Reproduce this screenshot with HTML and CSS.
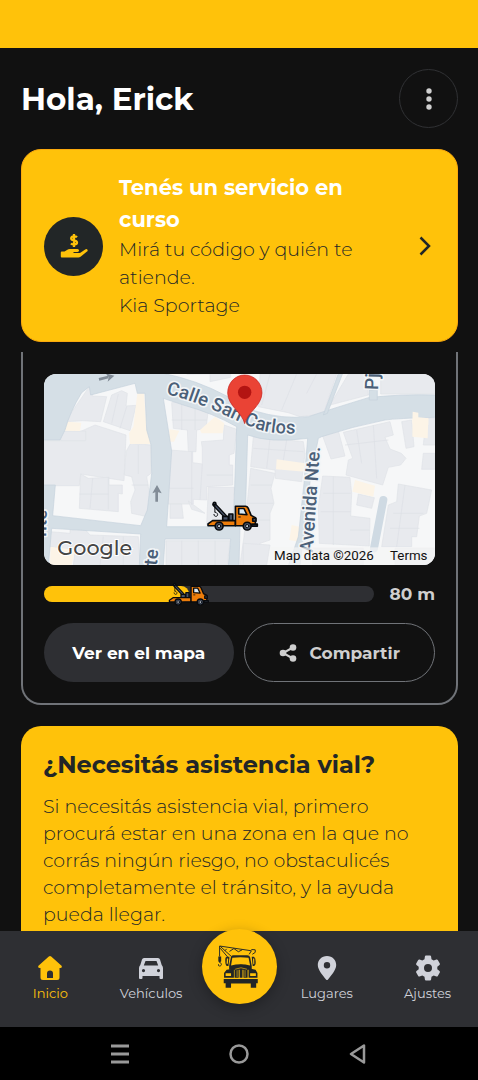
FILE: index.html
```html
<!DOCTYPE html>
<html lang="es">
<head>
    <meta charset="UTF-8">
    <meta name="viewport" content="width=device-width, initial-scale=1.0">
    <title>Asistencia vial</title>
    <link rel="stylesheet" href="styles.css">
</head>
<body>
    <!-- shared truck drawing, used on the map and on the progress bar -->
    <svg class="defs" aria-hidden="true">
        <symbol id="truck" viewBox="36 30 158 97">
            <g stroke="#080a0d" stroke-width="5" stroke-linejoin="round" stroke-linecap="round">
                <path d="M58 42 L91 77" stroke-width="12"/>
                <path d="M60 44 L92 78" stroke="#465166" stroke-width="4"/>
                <circle cx="59" cy="39" r="4" fill="#465166"/>
                <path d="M60 45V65M61 65C72 68 70 79 62 78Q57 77 57 72" fill="none" stroke-width="3"/>
                <path d="M84 91V78H101V91ZM103 91V71H115V91Z" fill="#465166"/>
                <path d="M39 101L53 91H123V107H39Z" fill="#ed7d0b"/>
                <path d="M123 107V47H154Q159 47 162 53L171 75L184 82V107Z" fill="#ed7d0b"/>
                <path d="M133 54H149L158 73L133 71Z" fill="#d8e9f5"/>
                <path d="M133 80H138" stroke-width="3"/>
                <path d="M176 84H186V93H176Z" fill="#465166"/>
                <path d="M173 102H190V108H173Z" fill="#465166"/>
                <circle cx="73" cy="108" r="12" fill="#465166"/>
                <circle cx="73" cy="108" r="5" fill="#c4ccd6" stroke-width="3"/>
                <circle cx="159" cy="108" r="12" fill="#465166"/>
                <circle cx="159" cy="108" r="5" fill="#c4ccd6" stroke-width="3"/>
            </g>
        </symbol>
    </svg>

    <div class="status-bar"></div>

    <main class="content">
        <header class="header">
            <h1>Hola, Erick</h1>
            <button class="menu-btn" type="button" aria-label="Menú">
                <svg width="8" height="24" viewBox="0 0 8 24" fill="#cfcfcf">
                    <circle cx="4" cy="4" r="2.7"/>
                    <circle cx="4" cy="12" r="2.7"/>
                    <circle cx="4" cy="20" r="2.7"/>
                </svg>
            </button>
        </header>

        <a class="service" href="#servicio">
            <span class="service-icon">
                <svg width="28" height="28" viewBox="0 0 28 28">
                    <path d="M17 5.2C15.800 4 11.200 3.700 11.200 6.400C11.200 9.100 17 7.600 17 10.500C17 13.100 12.500 12.900 10.900 11.500M14 2V15" fill="none" stroke="#ffc20a" stroke-width="2.300"/>
                    <path d="M.8 20.500Q.8 19.600 1.700 19.600H4.500L7 17.900Q8.200 17 10 17H17.500Q19.200 17.200 19 18.700Q18.700 20 17.200 20H13.500V21H20L25.200 17.400Q26.700 16.500 27.500 17.700Q28 18.800 27 19.600L20.500 24.800Q19.600 25.500 18.400 25.500H1.700Q.8 25.500.8 24.600Z" fill="#ffc20a"/>
                </svg>
            </span>
            <span class="service-text">
                <strong>Tenés un servicio en curso</strong>
                <span>Mirá tu código y quién te atiende.</span>
                <span>Kia Sportage</span>
            </span>
            <svg class="chevron" width="12" height="20" viewBox="0 0 12 20">
                <path d="M1.500 1.500L10 10L1.500 18.500" fill="none" stroke="#222627" stroke-width="2.500"/>
            </svg>
        </a>

        <section class="tracking">
            <svg class="map" viewBox="12 12 1173 573" preserveAspectRatio="xMidYMid slice" role="img" aria-label="Mapa">
                <rect x="12" y="12" width="1173" height="573" fill="#f6f7f8"/>
                <!-- buildings -->
                <g fill="#e8eaee" stroke="#dfe2e7" stroke-width="2">
                    <path d="M12 212H60L165 165L258 195L252 332L122 312L118 347H12Z"/>
                    <path d="M75 155L148 50L158 78L200 80L182 155L130 152ZM62 183H137V212H62Z"/>
                    <path d="M215 75L245 62L262 70L258 108L288 106L270 182L190 155Z"/>
                    <path d="M272 220L333 225V310L320 320L333 400L322 440L275 430L272 395L285 360L275 320L253 315L258 245Z"/>
                    <path d="M122 312L145 325L207 322V345H247V372L235 370V425L118 415Z"/>
                    <path d="M30 485L90 490V480L135 478L150 495L295 500L300 585H100L105 545L30 530Z"/>
                    <path d="M395 98L430 88L505 120L498 175L470 180L468 245H445L442 180L400 175Z"/>
                    <path d="M388 240L458 245V278L487 282V235L484 215L550 210L552 165L590 178L582 250L568 255V285H578V345L500 350V390L460 388V402H382Z"/>
                    <path d="M390 402H425L430 445H390ZM445 393L495 430L455 418ZM505 352H583L578 465H500Z"/>
                    <path d="M378 512H570L562 585H378ZM440 12L510 10V35L572 22V12Z"/>
                    <path d="M660 12H890L850 132L780 140L745 128L655 110Z"/>
                    <path d="M925 12H980L985 75L870 105ZM1022 12H1185V72L1022 72Z"/>
                    <path d="M640 200L790 215L795 250L785 335L706 325L705 300L632 290Z"/>
                    <path d="M632 295L705 310L693 355L702 400L690 430V510L660 520L655 585H600L612 500Z"/>
                    <path d="M848 198L895 182L915 258L873 267Z"/>
                    <path d="M910 187L1050 155L1060 195L1035 202L1050 237L1084 250L1098 265L1082 285L1045 292L1028 345L918 315L925 270L938 265Z"/>
                    <path d="M848 318L930 322L935 370L932 438L990 445L988 528L838 520L835 410Z"/>
                    <path d="M955 372L1003 383L995 415L950 405ZM1075 342L1175 360L1160 430L1138 438L1130 500H1115V530H1025L1045 405L1070 395Z"/>
                    <path d="M1085 155L1115 150L1122 230L1098 235ZM1158 145H1185V225H1150ZM1150 250H1185V298H1145Z"/>
                    <path d="M610 520L690 525L680 585H610ZM818 535H970V585H818ZM1065 535H1185V585H1065Z"/>
                </g>
                <g stroke="#dcdfe5" stroke-width="2" fill="none">
                    <path d="M158 325L150 415M205 322V418M235 72L215 160M118 372H205M260 110L240 175M295 225V312M275 345H325M455 245V405M487 282L480 390M500 315H578M385 355H460M425 92V180M465 105V180M395 150H500"/>
                    <path d="M190 500L180 585M250 500V585M425 512V585M475 512V585M525 512V585M690 12L665 105M770 12L725 120M830 12L800 70M690 205L680 295M740 210L725 300M632 345H695M620 400H700M620 450H690M850 370H932M842 425H932M880 320V525M950 180L965 280M1000 165L1010 325M915 225L1045 210M1060 430H1150M1050 475H1138M1095 345L1070 530M640 235L790 245M930 480H988"/>
                </g>
                <g fill="#fcf4e7">
                    <path d="M292 70H312L320 180L332 182V222H270L267 190L280 170Z"/>
                    <path d="M82 155L124 158L120 183L68 182ZM12 108L22 110L12 130ZM32 530L105 540L95 585H30Z"/>
                    <path d="M388 178L418 182L402 215H388ZM480 180L525 140L553 160L548 190L485 190Z"/>
                    <path d="M710 268L795 280V305L708 298ZM1118 125L1135 128V142L1165 145L1163 205L1117 200ZM945 330L1005 347L1000 380L937 365ZM755 465L778 470L775 515L748 510Z"/>
                </g>
                <!-- streets -->
                <g fill="#d5dfe6" stroke="#c5d2dc" stroke-width="2">
                    <path d="M10 10H370Q470 30 560 78L645 123Q725 148 805 140Q880 115 985 83Q1080 72 1187 75V142Q1070 145 1035 150Q935 170 845 200L835 205L812 320L790 500L780 587H745L775 500L792 340L803 205Q690 220 623 195L615 470H600L597 587H565L572 507H375L370 587H298L302 492L35 475L25 587H10V345H46L38 437L302 467L322 420L335 310L333 225L320 180L315 70H292L285 40L152 75L148 50L125 68Q90 125 75 180L60 210H10ZM370 85L395 243L380 470H580L590 170Q520 130 430 105Z" fill-rule="evenodd"/>
                    <path d="M895 10H908L862 130L850 135ZM988 60H1012V90H988Z"/>
                </g>
                <path d="M1118 125L1135 128V142L1165 145V165L1117 160Z" fill="#fcf4e7"/>
                <path d="M1030 390L1002 535" stroke="#cfdae3" stroke-width="24" stroke-linecap="round"/>
                <path d="M177 28L205 21M350 395V363" stroke="#828c97" stroke-width="8"/>
                <path d="M197 10L223 17L203 35L206 22ZM351 345L365 370L350 365L337 370Z" fill="#828c97"/>
                <!-- street names -->
                <defs>
                    <path id="calle" d="M378 72C470 92 550 135 620 165S720 190 830 192"/>
                </defs>
                <g class="street">
                    <text><textPath href="#calle">Calle San Carlos</textPath></text>
                    <text transform="translate(818 548) rotate(-86)">Avenida Nte.</text>
                    <text transform="translate(1014 60) rotate(-88)">Pj</text>
                    <text transform="translate(350 588) rotate(-84)">te</text>
                    <text transform="translate(18 500) rotate(-88)">nte</text>
                </g>
                <!-- pin -->
                <path d="M614 161C607 128 564 108 563 69C563 38 586 15 614 15C643 15 666 39 666 69C665 108 621 128 614 161Z" fill="#ea4335" stroke="#c5221f" stroke-width="2"/>
                <circle cx="614" cy="67" r="20" fill="#b31412"/>
                <use href="#truck" x="500" y="392" width="157" height="95"/>
                <rect x="690" y="532" width="495" height="53" fill="#f5f5f5" opacity=".7"/>
                <text class="google" x="52" y="554">Google</text>
                <text class="credit" x="702" y="571">Map data ©2026</text>
                <text class="credit" x="1050" y="571">Terms</text>
            </svg>

            <div class="progress-row">
                <div class="progress">
                    <div class="progress-fill" style="width: 44%"></div>
                    <svg class="progress-truck" style="left: 44%"><use href="#truck"/></svg>
                </div>
                <span class="distance">80 m</span>
            </div>

            <div class="actions">
                <button class="btn btn-dark" type="button">Ver en el mapa</button>
                <button class="btn btn-outline" type="button">
                    <svg width="18" height="18" viewBox="0 0 18 18" fill="#cfcfcf">
                        <path d="M14 3.500L4 9L14 14.500" fill="none" stroke="#cfcfcf" stroke-width="2"/>
                        <circle cx="14" cy="3.500" r="3.300"/>
                        <circle cx="4" cy="9" r="3.300"/>
                        <circle cx="14" cy="14.500" r="3.300"/>
                    </svg>
                    Compartir
                </button>
            </div>
        </section>

        <section class="help">
            <h2>¿Necesitás asistencia vial?</h2>
            <p>Si necesitás asistencia vial, primero procurá estar en una zona en la que no corrás ningún riesgo, no obstaculicés completamente el tránsito, y la ayuda pueda llegar.</p>
        </section>
    </main>

    <nav class="tabs">
        <a class="tab active" href="#inicio">
            <svg viewBox="0 0 26 26" fill="currentColor">
                <path fill-rule="evenodd" d="M11.800 1.500Q13 .500 14.200 1.500L24.800 11Q25.300 13 23.500 13H22.500V22.500Q22.500 25 20 25H6Q3.500 25 3.500 22.500V13H2.500Q.700 13 1.200 11ZM10 23H16V18.500Q16 15.500 13 15.500T10 18.500Z"/>
            </svg>
            Inicio
        </a>
        <a class="tab" href="#vehiculos">
            <svg viewBox="0 0 26 26" fill="currentColor">
                <path fill-rule="evenodd" d="M6 3H20Q21.500 3 22 4.500L23.700 10Q25 11.500 25 13V23Q25 24 24 24H22.500Q21.500 24 21.500 23V21H4.500V23Q4.500 24 3.500 24H2Q1 24 1 23V13Q1 11.500 2.300 10L4 4.500Q4.500 3 6 3ZM7.500 6L5.800 10.500H20.200L18.500 6ZM5.500 14A1.600 1.600 0 1 0 5.500 17.200A1.600 1.600 0 1 0 5.500 14ZM20.500 14A1.600 1.600 0 1 0 20.500 17.200A1.600 1.600 0 1 0 20.500 14Z"/>
            </svg>
            Vehículos
        </a>
        <button class="fab" type="button" aria-label="Pedir grúa">
            <svg width="42" height="46" viewBox="2 -1 132 144">
                <g fill="none" stroke="#222627" stroke-width="3">
                    <path d="M7 5L107 20L100 31M107 16L119 17V25L110 31M9 6L43 37M9 12L36 44M29 14L24 20M38 22L52 13L66 23L78 17M7 5V38M7 57C15 58 14 68 7 68Q2 68 3 62"/>
                </g>
                <path d="M3 38H12V53L7 58L3 53Z" fill="#222627"/>
                <g fill="#222627">
                    <path fill-rule="evenodd" d="M43 38Q45 34 51 34H94Q101 34 103 40L108 68V80H37V68ZM47 42L43 66Q73 59 103 66L98 42Q73 38 47 42Z"/>
                    <path fill-rule="evenodd" d="M25 45Q25 39 31 39H38L35 68H30Q24 65 25 45ZM30 44L29 61H33L34 44ZM108 39H115Q122 44 120 62L116 68H111ZM112 44L113 62H116V44Z"/>
                    <path fill-rule="evenodd" d="M29 80L45 77L52 75V105H21V90ZM26 91H43V99H26ZM98 75L120 80L126 90V105H98ZM103 91H121V99H103Z"/>
                    <path d="M54 105V75L67 66V105ZM70 105V64H79V105ZM82 105V66L95 75V105Z"/>
                    <path d="M20 109H127V122H122V136H105V123H43V136H26V122H20Z"/>
                </g>
                <path d="M62 81V103M87 81V103M56 78Q74 69 93 78" fill="none" stroke="#ffc20a" stroke-width="2"/>
            </svg>
        </button>
        <a class="tab" href="#lugares">
            <svg viewBox="0 0 26 26" fill="currentColor">
                <path fill-rule="evenodd" d="M13 1C18.500 1 22.200 5 22.200 10C22.200 15 17 20.500 14 24.500Q13 25.700 12 24.500C9 20.500 3.800 15 3.800 10C3.800 5 7.500 1 13 1ZM13 7A3.200 3.200 0 1 0 13 13.400A3.200 3.200 0 1 0 13 7Z"/>
            </svg>
            Lugares
        </a>
        <a class="tab" href="#ajustes">
            <svg viewBox="0 0 26 26" fill="currentColor">
                <path fill-rule="evenodd" d="M11 .5H15Q16 .5 16.100 1.500L16.500 4.300L18.700 5.600L21.400 4.500Q22.300 4.200 22.800 5L24.800 8.500Q25.200 9.300 24.500 10L22.300 11.700V14.300L24.500 16Q25.200 16.700 24.800 17.500L22.800 21Q22.300 21.800 21.400 21.500L18.700 20.400L16.500 21.700L16.100 24.500Q16 25.500 15 25.500H11Q10 25.500 9.900 24.500L9.500 21.700L7.300 20.400L4.600 21.500Q3.700 21.800 3.200 21L1.200 17.500Q.8 16.700 1.500 16L3.700 14.300V11.700L1.500 10Q.8 9.300 1.200 8.500L3.200 5Q3.700 4.200 4.600 4.500L7.300 5.600L9.500 4.300L9.900 1.500Q10 .5 11 .5ZM13 9A4 4 0 1 0 13 17A4 4 0 1 0 13 9Z"/>
            </svg>
            Ajustes
        </a>
    </nav>

    <div class="system-nav">
        <button type="button" aria-label="Recientes">
            <svg width="20" height="20" viewBox="0 0 20 20"><path d="M1 2H19M1 10H19M1 18H19" stroke="#999" stroke-width="3"/></svg>
        </button>
        <button type="button" aria-label="Pantalla de inicio">
            <svg width="20" height="20" viewBox="0 0 20 20"><circle cx="10" cy="10" r="8.500" fill="none" stroke="#999" stroke-width="2.500"/></svg>
        </button>
        <button type="button" aria-label="Atrás">
            <svg width="20" height="20" viewBox="0 0 20 20"><path d="M16 1.500V18.500L3 10Z" fill="none" stroke="#999" stroke-width="2.500" stroke-linejoin="round"/></svg>
        </button>
    </div>
</body>
</html>
```

FILE: styles.css
```css
* {
    box-sizing: border-box;
}
body {
    margin: 0;
    height: 100vh;
    display: flex;
    flex-direction: column;
    background-color: #111;
    color: #fff;
    font-family: Montserrat, Inter, sans-serif;
}
button {
    font-family: inherit;
    padding: 0;
    border: none;
    background: none;
    cursor: pointer;
}
a {
    text-decoration: none;
}
.defs {
    position: absolute;
    width: 0;
    height: 0;
}
.status-bar {
    height: 48px;
    flex-shrink: 0;
    background-color: #ffc20a;
}
.content {
    flex: 1;
    min-height: 0;
    overflow-y: auto;
    scrollbar-width: none;
    padding: 21px 20px 0 21px;
}
.header {
    display: flex;
    align-items: center;
    justify-content: space-between;
    margin-bottom: 21px;
}
.header h1 {
    margin: 0;
    font-size: 31px;
    font-weight: 700;
}
.menu-btn {
    display: flex;
    align-items: center;
    justify-content: center;
    width: 59px;
    height: 59px;
    border: 1px solid #303134;
    border-radius: 50%;
}

/* active service */
.service {
    display: flex;
    align-items: center;
    gap: 16px;
    padding: 22px 22px 21px;
    background-color: #ffc20a;
    border: 1px solid #fba90d;
    border-radius: 20px;
    color: #222627;
}
.service-icon {
    display: flex;
    align-items: center;
    justify-content: center;
    flex-shrink: 0;
    width: 59px;
    height: 59px;
    border-radius: 50%;
    background-color: #222627;
}
.service-text {
    flex: 1;
    font-size: 19px;
    font-weight: 300;
    line-height: 28px;
}
.service-text strong,
.service-text span {
    display: block;
}
.service-text strong {
    color: #fff;
    font-size: 21px;
    font-weight: 700;
    line-height: 32px;
}
.chevron {
    flex-shrink: 0;
    margin-right: 4px;
}

/* map and progress */
.tracking {
    margin-top: 10px;
    padding: 22px 21px 21px;
    border: solid #707378;
    border-width: 0 2px 2px;
    border-radius: 0 0 20px 20px;
}
.map {
    display: block;
    width: 100%;
    border-radius: 12px;
}
.street {
    font-family: Roboto, sans-serif;
    font-size: 56px;
    font-weight: 500;
    fill: #4b6078;
    stroke: #f2f5f7;
    stroke-width: 10px;
    stroke-linejoin: round;
    paint-order: stroke;
}
.google {
    font-size: 62px;
    font-weight: 500;
    fill: #454545;
    stroke: #fff;
    stroke-width: 6px;
    paint-order: stroke;
}
.credit {
    font-family: Roboto, sans-serif;
    font-size: 40px;
    fill: #111;
}
.progress-row {
    display: flex;
    align-items: center;
    gap: 16px;
    margin: 18px 0;
}
.progress {
    position: relative;
    flex: 1;
    height: 16px;
    border-radius: 8px;
    background-color: #2e2f33;
}
.progress-fill {
    height: 100%;
    border-radius: 8px;
    background-color: #ffc20a;
}
.progress-truck {
    position: absolute;
    top: -4px;
    width: 42px;
    height: 25px;
    margin-left: -21px;
}
.distance {
    color: #cfcfcf;
    font-size: 17px;
    font-weight: 700;
    line-height: 22px;
}
.actions {
    display: flex;
    gap: 10px;
}
.btn {
    display: flex;
    align-items: center;
    justify-content: center;
    gap: 13px;
    flex: 1;
    height: 59px;
    border-radius: 30px;
    font-size: 17px;
    font-weight: 700;
}
.btn-dark {
    background-color: #2e2f33;
    color: #fff;
}
.btn-outline {
    border: 1px solid #707378;
    color: #cfcfcf;
}

/* assistance card */
.help {
    margin-top: 21px;
    padding: 22px;
    background-color: #ffc20a;
    border-radius: 20px;
    color: #222627;
}
.help h2 {
    margin: 0 0 12px;
    font-size: 24px;
    font-weight: 700;
    line-height: 33px;
}
.help p {
    margin: 0;
    font-size: 19px;
    font-weight: 300;
    line-height: 27px;
}

/* bottom navigation */
.tabs {
    position: relative;
    display: grid;
    grid-template-columns: 1fr 1fr 75px 1fr 1fr;
    flex-shrink: 0;
    height: 96px;
    background-color: #2e2f33;
}
.tab {
    display: flex;
    flex-direction: column;
    align-items: center;
    gap: 2px;
    padding-top: 24px;
    color: #d0d2da;
    font-size: 13px;
    font-weight: 400;
    line-height: 20px;
}
.tab svg {
    width: 26px;
    height: 26px;
}
.active {
    color: #ffc20a;
}
.fab {
    display: flex;
    align-items: center;
    justify-content: center;
    width: 75px;
    height: 75px;
    margin-top: -2px;
    border-radius: 50%;
    background-color: #ffc20a;
    box-shadow: 0 4px 14px rgba(0, 0, 0, 0.3);
}
.system-nav {
    display: flex;
    align-items: center;
    justify-content: center;
    gap: 99px;
    flex-shrink: 0;
    height: 53px;
    background-color: #000;
}
.system-nav svg {
    display: block;
}
```
